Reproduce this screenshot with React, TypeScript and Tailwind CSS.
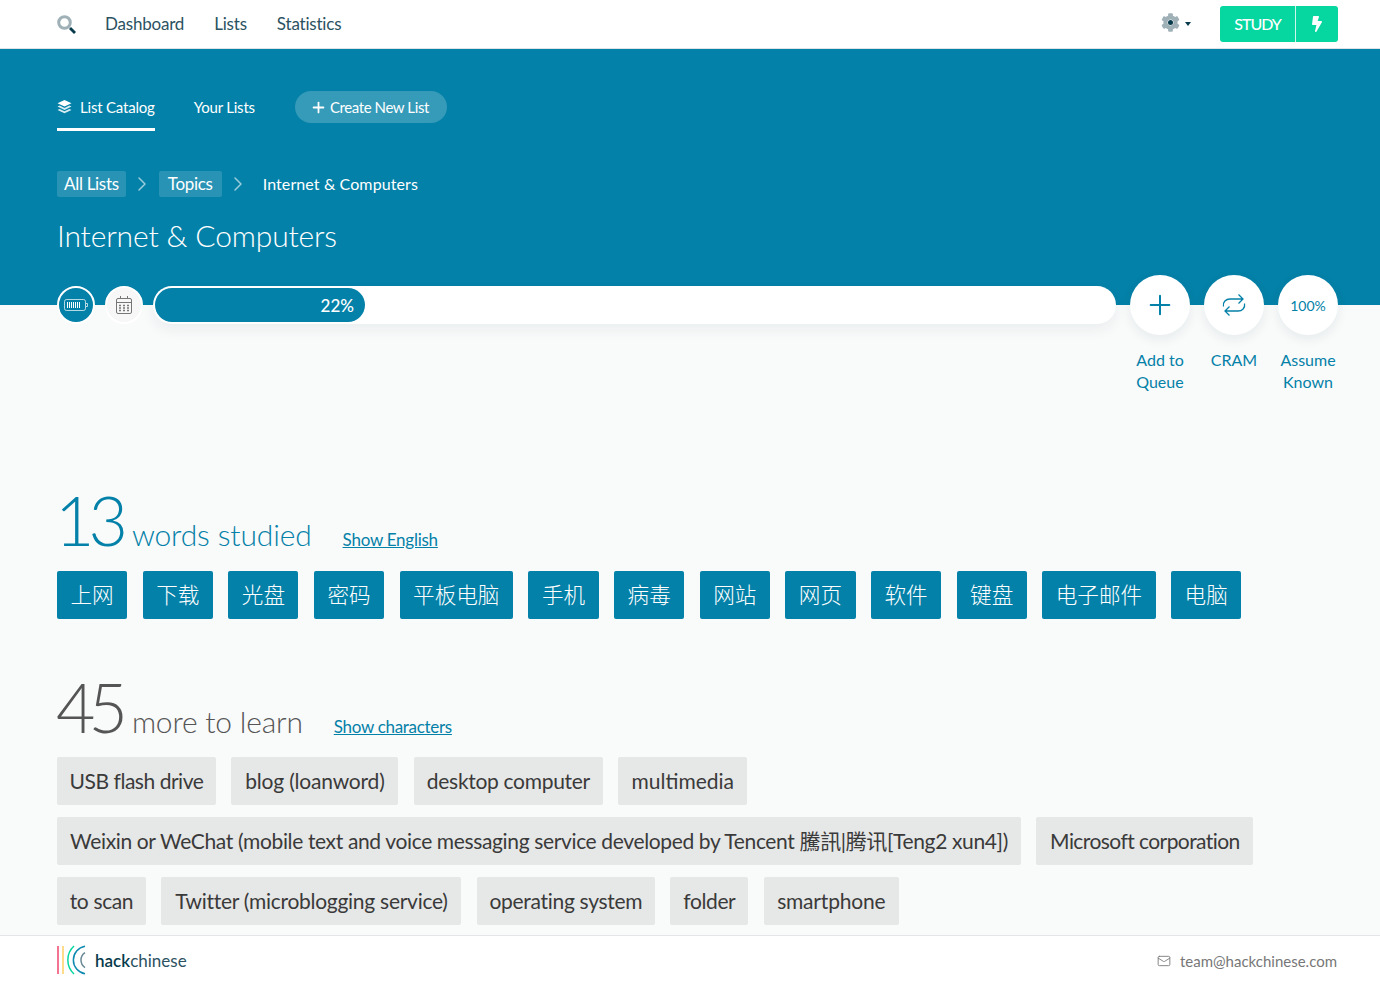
import { ChevronRight, Plus, Mail } from "lucide-react";
import { FaBolt, FaCog } from "react-icons/fa";

const studied = ["上网", "下载", "光盘", "密码", "平板电脑", "手机", "病毒", "网站", "网页", "软件", "键盘", "电子邮件", "电脑"];

const toLearn = [
  { text: "USB flash drive", size: "w-[159px] tracking-[-0.47px]" },
  { text: "blog (loanword)", size: "w-[167px] tracking-[-0.2px]" },
  { text: "desktop computer", size: "w-[189px] tracking-[-0.3px]" },
  { text: "multimedia", size: "w-[129px]" },
  { text: "Weixin or WeChat (mobile text and voice messaging service developed by Tencent 騰訊|腾讯[Teng2 xun4])", size: "w-[964px] tracking-[-0.36px]" },
  { text: "Microsoft corporation", size: "w-[217px] tracking-[-0.57px]" },
  { text: "to scan", size: "w-[89px] tracking-[-0.37px]" },
  { text: "Twitter (microblogging service)", size: "w-[300px] tracking-[-0.27px]" },
  { text: "operating system", size: "w-[178px] tracking-[-0.3px]" },
  { text: "folder", size: "w-[78px] tracking-[-0.37px]" },
  { text: "smartphone", size: "w-[135px] tracking-[-0.2px]" },
];

const Logo = () => (
  <svg width="30" height="30" viewBox="0 0 30 30" fill="none" strokeWidth="1.5">
    <path d="M1 1v28" stroke="#ef476f" />
    <path d="M6 1v28" stroke="#ffd166" />
    <path d="M17 1A19 19 0 0 0 17 29" stroke="#06d6a0" />
    <path d="M28 1.2A14 14 0 0 0 28 28.8" stroke="#118ab2" />
    <path d="M28 7.5A9 9 0 0 0 28 22.5" stroke="#073b4c" strokeOpacity="0.6" />
  </svg>
);

const SearchIcon = () => (
  <svg width="19" height="19" viewBox="0 0 19 19" fill="none">
    <circle cx="7.5" cy="7.5" r="5.8" stroke="#9fb0b7" strokeWidth="3" />
    <path d="M13 13l5 5" stroke="#073b4c" strokeWidth="2.8" />
  </svg>
);

const LayersIcon = () => (
  <svg width="15" height="14" viewBox="0 0 15 14" fill="white">
    <path d="M7.5 0l7 3.2-7 3.3-7-3.3z" />
    <path d="M2.6 5.6l4.9 2.3 4.9-2.3 2.1 1-7 3.3-7-3.3z" fillOpacity="0.85" />
    <path d="M2.6 9l4.9 2.3L12.4 9l2.1 1-7 3.3-7-3.3z" fillOpacity="0.85" />
  </svg>
);

const Battery = () => (
  <svg width="24" height="12" viewBox="0 0 24 12" fill="none" stroke="white">
    <rect x="0.5" y="0.5" width="21" height="11" rx="2" strokeOpacity="0.7" />
    <path d="M22 4.5h1.5v3H22" strokeOpacity="0.7" />
    <path d="M3.5 3v6M5.5 3v6M7.5 3v6M9.5 3v6M11.5 3v6M13.5 3v6M15.5 3v6" />
  </svg>
);

const Calendar = () => (
  <svg width="16" height="18" viewBox="0 0 16 18" fill="none" stroke="#777">
    <rect x="0.5" y="2.5" width="15" height="15" rx="1.5" />
    <path d="M.5 6.5h15M4.5 0v3M11.5 0v3" />
    <path d="M3 9.5h2M7 9.5h2M11 9.5h2M3 12h2M7 12h2M11 12h2M3 14.5h2M7 14.5h2M11 14.5h2" strokeWidth="1.6" />
  </svg>
);

const RepeatIcon = () => (
  <svg width="24" height="24" viewBox="0 0 24 24" fill="none" stroke="currentColor" strokeWidth="1.3">
    <path d="M1.5 13.5C.5 9 4 6 8 6H21M16.5 1.5L21 6l-4.5 4.5" />
    <path d="M22.5 10.5c1 4.5-2.5 7.5-6.5 7.5H3M7.5 13.5L3 18l4.5 4.5" />
  </svg>
);

const ActionButton = ({ label, children }: { label: React.ReactNode; children: React.ReactNode }) => (
  <div className="flex w-[60px] flex-col items-center">
    <div className="flex h-[60px] w-[60px] items-center justify-center rounded-full bg-white text-[#0481a8] shadow-[0_4px_12px_rgba(7,59,76,0.08)]">
      {children}
    </div>
    <div className="mt-[14px] whitespace-nowrap text-center text-[16px] leading-[22px] text-[#0481a8]">{label}</div>
  </div>
);

export default function App() {
  return (
    <div className="flex h-screen flex-col overflow-hidden bg-[#f9fafa] font-['Lato','Noto_Sans_CJK_SC',sans-serif] text-[#073b4c]">
      {/* Top nav */}
      <header className="flex h-[49px] shrink-0 items-center border-b border-[#dde3e6] bg-white pl-[57px] pr-[42px]">
        <SearchIcon />
        <nav className="ml-[29px] flex gap-[30px] text-[17px] tracking-[-0.2px] text-[#2c5262]">
          <a>Dashboard</a>
          <a>Lists</a>
          <a>Statistics</a>
        </nav>
        <div className="ml-auto flex items-center">
          <span className="relative mb-[4px] flex">
            <FaCog className="h-[19px] w-[19px] text-[#9fb0b7]" />
            <span className="absolute left-[7px] top-[7px] h-[5px] w-[5px] rounded-full bg-[#073b4c]" />
          </span>
          <span className="ml-[5px] border-x-[3.5px] border-t-[4px] border-x-transparent border-t-[#073b4c]" />
          <div className="ml-[29px] flex h-[36px] overflow-hidden rounded-[3px] bg-[#06d6a0] text-white">
            <span className="flex w-[75px] items-center justify-center text-[16px] font-medium tracking-[-1px]">STUDY</span>
            <span className="flex w-[43px] items-center justify-center border-l border-white/80">
              <FaBolt className="h-[16px] w-[10px]" />
            </span>
          </div>
        </div>
      </header>

      {/* Blue banner */}
      <section className="h-[256px] shrink-0 bg-[#0481a8] px-[57px] pt-[34px] text-white">
        <div className="flex items-center text-[15px] tracking-[-0.2px]">
          <a className="flex h-[48px] items-center gap-[8px] border-b-[3px] border-white pt-[3px]">
            <LayersIcon />
            List Catalog
          </a>
          <a className="ml-[39px]">Your Lists</a>
          <a className="ml-[40px] flex h-[32px] items-center gap-[3px] rounded-full bg-white/20 pl-[15px] pr-[18px] tracking-[-0.4px]">
            <Plus className="h-[17px] w-[17px]" strokeWidth={2.5} />
            Create New List
          </a>
        </div>
        <div className="mt-[40px] flex items-center text-[17px] tracking-[-0.3px]">
          <a className="rounded-[2px] bg-white/15 px-[7px] leading-[26px]">All Lists</a>
          <ChevronRight className="ml-[4px] mr-[5px] h-[24px] w-[24px] text-white/60" strokeWidth={1.5} />
          <a className="rounded-[2px] bg-white/15 px-[9px] leading-[26px]">Topics</a>
          <ChevronRight className="ml-[4px] mr-[13px] h-[24px] w-[24px] text-white/60" strokeWidth={1.5} />
          <span className="text-[16px] tracking-[0.1px]">Internet &amp; Computers</span>
        </div>
        <h1 className="mt-[16px] text-[30px] font-light leading-[44px] tracking-[-0.15px]">Internet &amp; Computers</h1>
      </section>

      {/* Progress row */}
      <div className="relative z-10 -mt-[30px] flex h-[118px] shrink-0 items-start pl-[57px] pr-[42px]">
        <div className="mt-[11px] flex h-[38px] w-[38px] items-center justify-center rounded-full border-2 border-white bg-[#0481a8]">
          <Battery />
        </div>
        <div className="ml-[10px] mt-[11px] flex h-[38px] w-[38px] items-center justify-center rounded-full border-2 border-white bg-[#f7f7f7]">
          <Calendar />
        </div>
        <div className="ml-[10px] mt-[11px] h-[38px] w-[963px] rounded-full bg-white p-[2px] shadow-[0_6px_14px_rgba(7,59,76,0.06)]">
          <div className="flex h-[34px] w-[210px] items-center justify-end rounded-full bg-[#0481a8] pr-[11px] pt-[1px] text-[17px] font-medium text-white">
            22%
          </div>
        </div>
        <div className="ml-[14px] flex gap-[14px]">
          <ActionButton label={<>Add to<br />Queue</>}>
            <Plus className="h-[32px] w-[32px]" strokeWidth={1.5} />
          </ActionButton>
          <ActionButton label="CRAM">
            <RepeatIcon />
          </ActionButton>
          <ActionButton label={<>Assume<br />Known</>}>
            <span className="text-[14px]">100%</span>
          </ActionButton>
        </div>
      </div>

      <main className="min-h-0 flex-1 overflow-hidden px-[57px]">
        {/* Studied */}
        <div className="mt-[86px] flex h-[82px] items-baseline">
          <span className="-ml-[2px] text-[68px] font-light leading-[82px] tracking-[-6px] text-[#0481a8]">13</span>
          <span className="ml-[10px] text-[30px] font-light tracking-[-0.15px] text-[#0481a8]">words studied</span>
          <a className="ml-[31px] text-[17px] tracking-[-0.25px] text-[#0481a8] underline">Show English</a>
        </div>
        <div className="mt-[10px] flex flex-wrap gap-x-[15.45px] gap-y-[12px]">
          {studied.map((w) => (
            <span key={w} className="flex h-[48px] items-center rounded-[2px] bg-[#0481a8] px-[13.5px] text-[21.6px] font-light text-white">
              {w}
            </span>
          ))}
        </div>

        {/* To learn */}
        <div className="mt-[47px] flex h-[82px] items-baseline">
          <span className="-ml-[1px] text-[68px] font-light leading-[82px] tracking-[-7px] text-[#555]">45</span>
          <span className="ml-[11px] text-[30px] font-light tracking-[-0.2px] text-[#555]">more to learn</span>
          <a className="ml-[31px] text-[17px] tracking-[-0.3px] text-[#0481a8] underline">Show characters</a>
        </div>
        <div className="mt-[9px] flex flex-wrap gap-x-[15.45px] gap-y-[12px]">
          {toLearn.map((w) => (
            <span key={w.text} className={`flex h-[48px] items-center justify-center whitespace-nowrap rounded-[2px] bg-[#e6e7e7] text-[21px] text-[#3a3a3a] ${w.size}`}>
              {w.text}
            </span>
          ))}
        </div>
      </main>

      <footer className="flex h-[49px] shrink-0 items-center justify-between border-t border-[#e3e5e8] bg-white pl-[57px] pr-[43px]">
        <div className="flex items-center gap-[8px] text-[17px] text-[#073b4c]">
          <Logo />
          <span className="pt-[2px]"><span className="font-semibold">hack</span><span className="text-[#2c5262]">chinese</span></span>
        </div>
        <div className="flex items-center gap-[9px] pt-[2px] text-[15px] text-[#777]">
          <Mail className="h-[14px] w-[14px]" strokeWidth={1.5} />
          team@hackchinese.com
        </div>
      </footer>
    </div>
  );
}
